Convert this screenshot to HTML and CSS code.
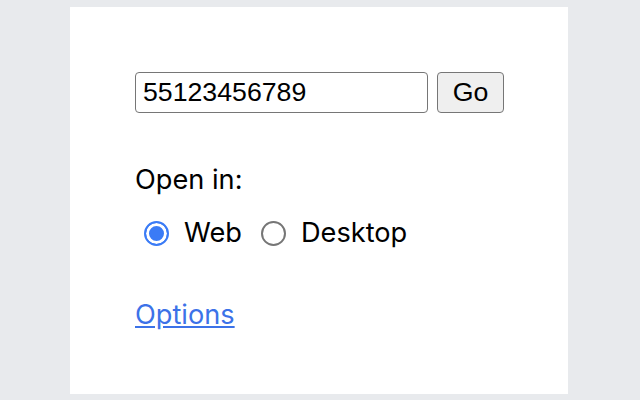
FILE: index.html
```html
<!DOCTYPE html>
<html>
<head>
<meta charset="utf-8">
<link rel="stylesheet" href="styles.css">
</head>
<body>
<div class="panel">
  <form class="go-row">
    <input class="number" type="text" value="55123456789">
    <button class="go" type="button">Go</button>
  </form>
  <div class="label">Open in:</div>
  <div class="radios">
    <label class="opt first"><input type="radio" name="target" checked><span>Web</span></label>
    <label class="opt"><input type="radio" name="target"><span>Desktop</span></label>
  </div>
  <div class="links"><a href="#" class="options">Options</a></div>
</div>
</body>
</html>
```
FILE: styles.css
```css
html, body {
  margin: 0;
  padding: 0;
}
body {
  background: #e8eaed;
  font-family: Inter, "Liberation Sans", Arial, sans-serif;
  font-size: 27.2px;
  line-height: 30px;
  color: #000;
  height: 400px;
  overflow: hidden;
}
.panel {
  box-sizing: border-box;
  width: 498px;
  height: 387px;
  margin: 7px 0 0 70px;
  padding: 65px 0 0 65px;
  background: #fff;
}
.go-row {
  display: flex;
  gap: 9px;
  margin: 0;
}
.number {
  box-sizing: border-box;
  width: 293px;
  height: 41px;
  padding: 0 7px;
  border: 1px solid #767676;
  border-radius: 4px;
  font-family: "Liberation Sans", Arial, sans-serif;
  font-size: 26.7px;
  color: #000;
  background: #fff;
  outline: none;
}
.go {
  box-sizing: border-box;
  width: 67px;
  height: 41px;
  padding: 0;
  border: 1px solid #767676;
  border-radius: 4px;
  background: #efefef;
  font-family: "Liberation Sans", Arial, sans-serif;
  font-size: 26.7px;
  color: #000;
}
.label {
  margin-top: 52px;
}
.radios {
  display: flex;
  margin-top: 23px;
}
.opt {
  display: inline-flex;
  align-items: center;
  margin-left: 19px;
}
.opt.first {
  margin-left: 9px;
}
.opt input {
  appearance: none;
  -webkit-appearance: none;
  box-sizing: border-box;
  width: 25px;
  height: 25px;
  margin: 0 15px 0 0;
  border: 2px solid #767676;
  border-radius: 50%;
  background: #fff;
}
.opt input:checked {
  border-color: #3a7bf6;
  background: #3a7bf6;
  box-shadow: inset 0 0 0 3px #fff;
}
.links {
  margin-top: 52px;
}
.options {
  color: #3c72e8;
  text-decoration: underline;
}
```
